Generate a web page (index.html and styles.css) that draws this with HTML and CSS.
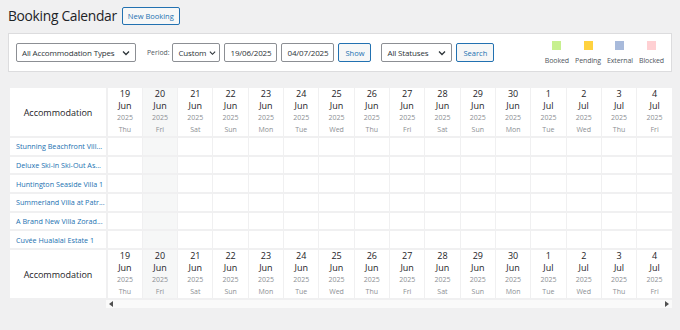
FILE: index.html
```html
<!DOCTYPE html>
<html lang="en">
<head>
    <meta charset="UTF-8">
    <meta name="viewport" content="width=device-width, initial-scale=1.0">
    <title>Booking Calendar</title>
    <link rel="stylesheet" href="styles.css">
</head>
<body>
    <div class="wrap">
        <div class="page-title">
            <h1>Booking Calendar</h1>
            <a href="#" class="title-action">New Booking</a>
        </div>

        <div class="filters">
            <div class="select select-type"><span>All Accommodation Types</span>
                <svg width="8" height="6" viewBox="0 0 8 6"><path d="M1 1.5l3 3 3-3" fill="none" stroke="#2c3338" stroke-width="1.3"/></svg>
            </div>
            <span class="label">Period:</span>
            <div class="select select-period"><span>Custom</span>
                <svg width="7" height="6" viewBox="0 0 8 6"><path d="M1 1.5l3 3 3-3" fill="none" stroke="#2c3338" stroke-width="1.3"/></svg>
            </div>
            <input class="date" type="text" value="19/06/2025">
            <input class="date" type="text" value="04/07/2025">
            <button class="btn">Show</button>
            <div class="select select-status"><span>All Statuses</span>
                <svg width="8" height="6" viewBox="0 0 8 6"><path d="M1 1.5l3 3 3-3" fill="none" stroke="#2c3338" stroke-width="1.3"/></svg>
            </div>
            <button class="btn">Search</button>

            <ul class="legend">
                <li><i class="booked"></i>Booked</li>
                <li><i class="pending"></i>Pending</li>
                <li><i class="external"></i>External</li>
                <li><i class="blocked"></i>Blocked</li>
            </ul>
        </div>

        <div class="calendar">
            <table id="calendar-table">
                <thead id="head-top"></thead>
                <tbody id="rows"></tbody>
                <tfoot id="head-bottom"></tfoot>
            </table>
            <div class="scrollbar">
                <span class="arrow left"></span>
                <span class="arrow right"></span>
            </div>
        </div>
    </div>

    <script>
        // build the date header and accommodation rows
        const months = ["Jan", "Feb", "Mar", "Apr", "May", "Jun", "Jul", "Aug", "Sep", "Oct", "Nov", "Dec"];
        const weekdays = ["Sun", "Mon", "Tue", "Wed", "Thu", "Fri", "Sat"];
        const accommodations = [
            "Stunning Beachfront Vill...",
            "Deluxe Ski-in Ski-Out As...",
            "Huntington Seaside Villa 1",
            "Summerland Villa at Patr...",
            "A Brand New Villa Zorad...",
            "Cuvée Hualalai Estate 1"
        ];

        const days = [];
        for (let d = new Date(2025, 5, 19); d <= new Date(2025, 6, 4); d.setDate(d.getDate() + 1)) {
            days.push(new Date(d));
        }

        function headerRow() {
            let html = '<tr><th class="acc-head">Accommodation</th>';
            days.forEach((day, index) => {
                html += `<th class="day${index === 1 ? ' today' : ''}">
                    <span class="num">${day.getDate()}</span>
                    <span class="mon">${months[day.getMonth()]}</span>
                    <span class="year">${day.getFullYear()}</span>
                    <span class="wd">${weekdays[day.getDay()]}</span>
                </th>`;
            });
            return html + '</tr>';
        }

        document.getElementById("head-top").innerHTML = headerRow();
        document.getElementById("head-bottom").innerHTML = headerRow();

        let rows = "";
        accommodations.forEach(name => {
            rows += `<tr><td class="acc"><a href="#">${name}</a></td>`;
            days.forEach((day, index) => {
                rows += `<td class="cell${index === 1 ? ' today' : ''}"></td>`;
            });
            rows += '</tr>';
        });
        document.getElementById("rows").innerHTML = rows;
    </script>
</body>
</html>
```

FILE: styles.css
```css
body {
    margin: 0;
    background-color: #f0f0f1;
    color: #1d2327;
    font-family: "Open Sans", "Noto Sans", sans-serif;
}

.wrap {
    padding: 7px 8px 0 8px;
}

.page-title {
    display: flex;
    align-items: center;
    gap: 5px;
}

.page-title h1 {
    margin: 0;
    font-size: 13.8px;
    font-weight: 400;
    letter-spacing: -0.3px;
    line-height: 18px;
}

.title-action {
    display: inline-block;
    height: 16px;
    line-height: 16px;
    padding: 0 5px;
    border: 1px solid #2271b1;
    border-radius: 2px;
    background-color: #f6f7f7;
    color: #2271b1;
    font-size: 7.5px;
    text-decoration: none;
}

.filters {
    margin-top: 8px;
    height: 37px;
    background-color: #fff;
    border: 1px solid #dcdcde;
    display: flex;
    align-items: center;
    padding: 0 7px;
}

.select {
    height: 19px;
    border: 1px solid #8c8f94;
    border-radius: 2px;
    background-color: #fff;
    display: flex;
    align-items: center;
    justify-content: space-between;
    gap: 3px;
    padding: 0 5px;
    font-size: 8px;
    letter-spacing: -0.15px;
    white-space: nowrap;
    color: #2c3338;
    box-sizing: border-box;
}

.select svg {
    flex-shrink: 0;
}

.select-type {
    width: 120px;
}

.select-period {
    width: 48px;
    margin-left: 3px;
    padding: 0 4px 0 5px;
}

.select-status {
    width: 71px;
    margin-left: 10px;
}

.label {
    margin-left: 11px;
    font-size: 6.8px;
    color: #50575e;
}

.date {
    width: 53px;
    height: 19px;
    box-sizing: border-box;
    margin: 0 0 0 4px;
    padding: 0;
    border: 1px solid #8c8f94;
    border-radius: 2px;
    font-family: inherit;
    font-size: 8px;
    letter-spacing: -0.15px;
    color: #2c3338;
    text-align: center;
}

.btn {
    height: 19px;
    margin-left: 4px;
    padding: 0 6px;
    border: 1px solid #2271b1;
    border-radius: 2px;
    background-color: #f6f7f7;
    color: #2271b1;
    font-family: inherit;
    font-size: 7.5px;
    cursor: pointer;
}

.legend {
    list-style-type: none;
    margin: 0 0 0 auto;
    padding: 0;
    display: flex;
    gap: 6px;
}

.legend li {
    display: flex;
    flex-direction: column;
    align-items: center;
    font-size: 7px;
    letter-spacing: -0.1px;
    color: #50575e;
    line-height: 9px;
}

.legend i {
    display: block;
    width: 9px;
    height: 9px;
    margin-bottom: 6px;
}

.legend .booked { background-color: #c7f08f; }
.legend .pending { background-color: #ffd23f; }
.legend .external { background-color: #a8badb; }
.legend .blocked { background-color: #ffd0d3; }

.calendar {
    margin: 16px 0 0 2px;
    width: 662px;
}

table {
    width: 662px;
    border-collapse: collapse;
    table-layout: fixed;
    background-color: #fff;
}

th, td {
    padding: 0;
}

.acc-head {
    width: 96px;
    font-size: 9px;
    font-weight: 400;
    border-right: 2px solid #f0f0f1;
}

thead tr {
    border-bottom: 2px solid #f0f0f1;
}

tfoot tr {
    border-top: 2px solid #f0f0f1;
}

.day {
    height: 48px;
    font-weight: 400;
    border-right: 1px solid #f0f0f1;
    line-height: 12px;
}

.day:last-child,
.cell:last-child {
    border-right: none;
}

.day span {
    display: block;
}

.day .num,
.day .mon {
    font-size: 9px;
    color: #1d2327;
}

.day .year,
.day .wd {
    font-size: 7px;
    color: #8c8f94;
}

.today {
    background-color: #f6f7f7;
}

tbody tr {
    height: 18.7px;
    border-bottom: 2px solid #f0f0f1;
}

tbody tr:last-child {
    border-bottom: none;
}

.acc {
    padding-left: 6px;
    font-size: 7.2px;
    white-space: nowrap;
    overflow: hidden;
    border-right: 2px solid #f0f0f1;
}

.acc a {
    color: #2271b1;
    text-decoration: none;
}

.cell {
    border-right: 1px solid #f0f0f1;
}

.scrollbar {
    margin: 2px 0 0 96px;
    height: 8px;
    background-color: #fafafa;
    display: flex;
    justify-content: space-between;
    align-items: center;
    padding: 0 3px;
}

.arrow {
    width: 0;
    height: 0;
    border-top: 3px solid transparent;
    border-bottom: 3px solid transparent;
}

.arrow.left {
    border-right: 4px solid #505050;
}

.arrow.right {
    border-left: 4px solid #505050;
}
```
